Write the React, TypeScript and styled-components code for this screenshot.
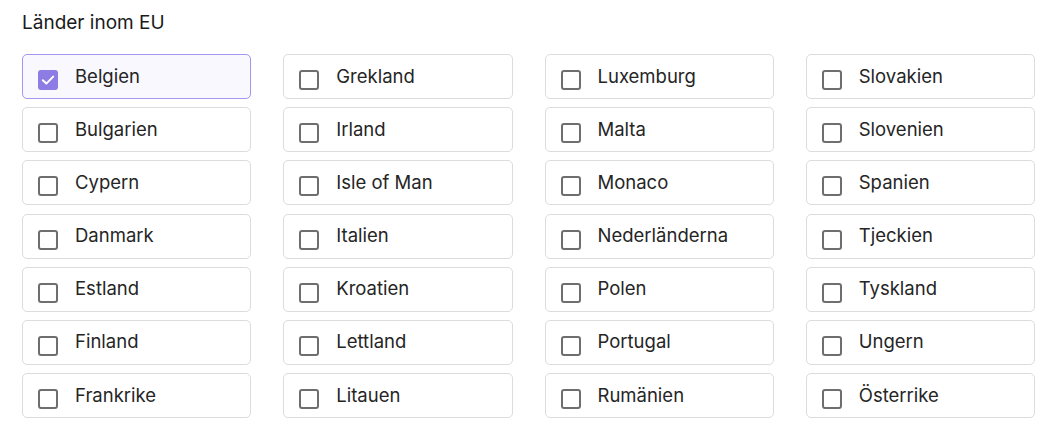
import React, { useState } from 'react';
import styled, { createGlobalStyle } from 'styled-components';

const GlobalStyle = createGlobalStyle`
  body {
    margin: 0;
    background: #fff;
    font-family: Inter, "Noto Sans", sans-serif;
    color: #222;
  }
`;

const Container = styled.div`
  padding: 10px 27px 20px 22px;
`;
const Title = styled.div`
  font-size: 19px;
  font-weight: 420;
  color: #1a1a1a;
  line-height: 26px;
  margin-bottom: 18px;
`;
const Grid = styled.div`
  display: grid;
  grid-template-columns: repeat(4, 1fr);
  grid-auto-flow: column;
  grid-template-rows: repeat(7, 45px);
  gap: 8.2px 32px;
`;
const Card = styled.label<{ $checked: boolean }>`
  display: flex;
  align-items: center;
  gap: 17px;
  padding: 0 15px;
  border-radius: 5px;
  border: 1px solid ${p => (p.$checked ? '#a596ee' : '#dcdcdc')};
  background: ${p => (p.$checked ? '#f9f8ff' : '#fff')};
  cursor: pointer;
  box-sizing: border-box;
`;
const Box = styled.span<{ $checked: boolean }>`
  width: 20px;
  height: 20px;
  box-sizing: border-box;
  border-radius: 3px;
  margin-top: 7px;
  flex-shrink: 0;
  display: flex;
  align-items: center;
  justify-content: center;
  border: ${p => (p.$checked ? 'none' : '2px solid #6e6e6e')};
  background: ${p => (p.$checked ? '#8d7ce3' : '#fff')};
`;
const Label = styled.span`
  font-size: 18.5px;
  color: #252525;
  line-height: 24px;
  padding-bottom: 2px;
`;

const countries = [
  'Belgien', 'Bulgarien', 'Cypern', 'Danmark', 'Estland', 'Finland', 'Frankrike',
  'Grekland', 'Irland', 'Isle of Man', 'Italien', 'Kroatien', 'Lettland', 'Litauen',
  'Luxemburg', 'Malta', 'Monaco', 'Nederländerna', 'Polen', 'Portugal', 'Rumänien',
  'Slovakien', 'Slovenien', 'Spanien', 'Tjeckien', 'Tyskland', 'Ungern', 'Österrike',
];

const App = () => {
  const [selected, setSelected] = useState<string[]>(['Belgien']);

  const toggle = (name: string) =>
    setSelected(s => (s.includes(name) ? s.filter(n => n !== name) : [...s, name]));

  return (
    <Container>
      <GlobalStyle />
      <Title>Länder inom EU</Title>
      <Grid>
        {countries.map(name => {
          const checked = selected.includes(name);
          return (
            <Card key={name} $checked={checked} onClick={() => toggle(name)}>
              <Box $checked={checked}>
                {checked && (
                  <svg width="16" height="16" viewBox="0 0 16 16">
                    <path d="M2.8 8.3 L6.3 11.6 L13.2 4.6" fill="none" stroke="#fff" strokeWidth="2" strokeLinecap="round" strokeLinejoin="round" />
                  </svg>
                )}
              </Box>
              <Label>{name}</Label>
            </Card>
          );
        })}
      </Grid>
    </Container>
  );
};

export default App;
